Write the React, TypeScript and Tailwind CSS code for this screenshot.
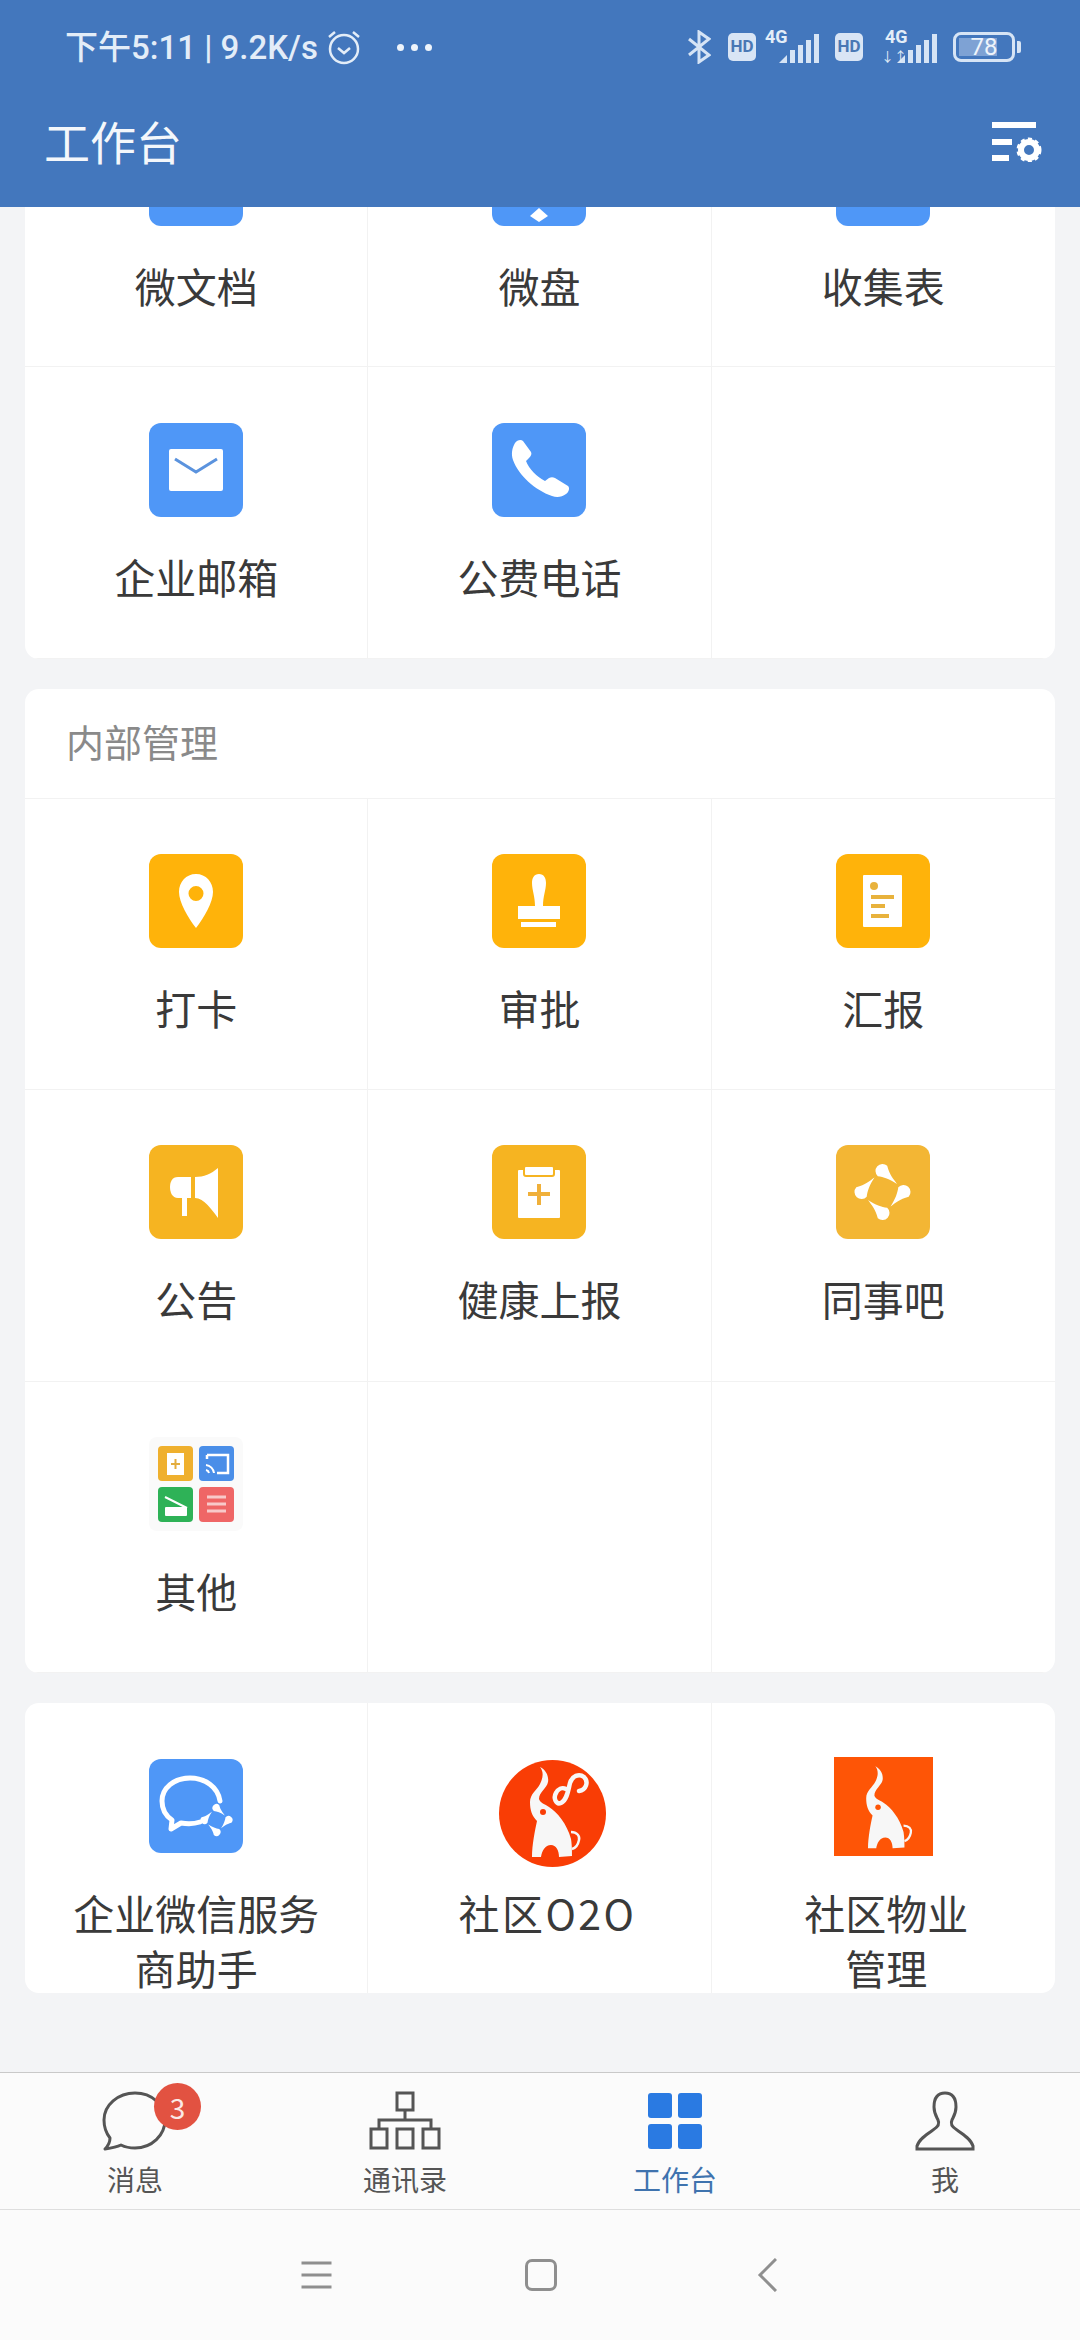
import React from "react";

const Box = ({ color, children }: { color: string; children?: React.ReactNode }) => (
  <svg width="94" height="94" viewBox="0 0 94 94" className="shrink-0">
    <rect width="94" height="94" rx="12" fill={color} />
    {children}
  </svg>
);

function Elephant({ eye, transform }: { eye: string; transform?: string }) {
  return (
    <g transform={transform}>
      <path
        d="M41 7C47 10 50 16 49 22C48 28 40 32 40 39C41 43 46 44 50 47C58 52 68 64 72 79C73 85 73 92 73 96L60 97C60 90 57 85 52 85C46 85 43 91 42 97L33 97C33 85 36 70 38 61C33 56 31 50 31 42C31 34 38 30 41 24C44 18 45 12 41 7Z"
        fill="#f7f7f7"
      />
      <circle cx="44" cy="52" r="3" fill={eye} />
      <path d="M72 72C78 72 81 76 80 80C79 85 77 88 73 89" fill="none" stroke="#f7f7f7" strokeWidth="2.500" />
    </g>
  );
}

function Blobs({ cx, cy, scale = 1 }: { cx: number; cy: number; scale?: number }) {
  return (
    <g transform={`translate(${cx} ${cy}) scale(${scale})`} fill="#fff">
      {[0, 90, 180, 270].map((r) => (
        <path
          key={r}
          transform={`rotate(${r})`}
          d="M4.700 -26.200A7 7 0 0 0 -4.700 -15.800C1 -15 7 -13 14.500 -8C11 -13 7 -17 4.700 -26.200Z"
        />
      ))}
    </g>
  );
}

const icons: Record<string, React.ReactNode> = {
  plain: <Box color="#4f97f7" />,
  disk: (
    <Box color="#4f97f7">
      <path d="M47 76l9 8-9 6-9-6z" fill="#fff" />
    </Box>
  ),
  mail: (
    <Box color="#4f97f7">
      <rect x="20" y="26" width="54" height="42" rx="2" fill="#fff" />
      <path d="M26 36l21 13 21-13" fill="none" stroke="#5b93de" strokeWidth="3" />
    </Box>
  ),
  phone: (
    <Box color="#4f97f7">
      <path
        d="M23 20c2-3 6-4 8-2l8 11c1 2 0 4-2 6l-3 3c3 8 11 16 19 20l4-3c2-1 4-1 6 0l13 8c2 2 1 6-2 8-4 3-9 4-14 2C43 67 27 53 21 37c-2-6-1-12 2-17z"
        fill="#fff"
      />
    </Box>
  ),
  pin: (
    <Box color="#ffb30a">
      <path
        fillRule="evenodd"
        d="M47 20c10 0 17 8 17 18 0 10-9 26-17 36-8-10-17-26-17-36 0-10 7-18 17-18zm0 12a7 7 0 1 0 0 15 7 7 0 0 0 0-15z"
        fill="#fff"
      />
    </Box>
  ),
  stamp: (
    <Box color="#ffb30a">
      <path d="M47 20c5 0 7 4 7 9 0 7-3 13-3 23H43c0-10-3-16-3-23 0-5 2-9 7-9z" fill="#fff" />
      <rect x="26" y="52" width="42" height="13" fill="#fff" />
      <rect x="29" y="68" width="35" height="5" fill="#fff" />
    </Box>
  ),
  report: (
    <Box color="#ffb30a">
      <rect x="27" y="21" width="39" height="52" rx="1" fill="#fff" />
      <circle cx="38" cy="32" r="4" fill="#e8b23c" />
      <rect x="35" y="41" width="23" height="4" fill="#e8b23c" />
      <rect x="35" y="50" width="14" height="4" fill="#e8b23c" />
      <rect x="35" y="60" width="18" height="4" fill="#e8b23c" />
    </Box>
  ),
  notice: (
    <Box color="#f6b421">
      <path d="M42 32H29c-6 0-8 5-8 10s2 11 8 11h13z" fill="#fff" />
      <path d="M46 32c9 0 16-3 23-9v50c-6-8-14-20-23-20z" fill="#fff" />
      <rect x="33" y="53" width="5" height="18" fill="#fff" />
    </Box>
  ),
  health: (
    <Box color="#f6b421">
      <rect x="26" y="25" width="42" height="48" rx="1" fill="#fff" />
      <rect x="32" y="21" width="30" height="10" rx="2" fill="#fff" stroke="#f6b421" strokeWidth="2" />
      <path d="M47 39v21M36 49h22" stroke="#f0b03a" strokeWidth="4" />
    </Box>
  ),
  colleague: (
    <Box color="#f3b634">
      <Blobs cx={46.5} cy={47} />
    </Box>
  ),
  other: (
    <svg width="94" height="94" viewBox="0 0 94 94" className="shrink-0">
      <rect width="94" height="94" rx="8" fill="#fafafa" />
      <rect x="9" y="9" width="35" height="35" rx="4" fill="#efb02e" />
      <rect x="18" y="16" width="17" height="22" fill="#fff" />
      <path d="M26.500 22v10M22 27h9" stroke="#e3ac3c" strokeWidth="2" />
      <rect x="50" y="9" width="35" height="35" rx="4" fill="#4a8ee8" />
      <path d="M58 18h21v18H68M58 22v-4" fill="none" stroke="#fff" strokeWidth="2.500" />
      <path d="M57 28a9 9 0 0 1 8 8M57 33a4 4 0 0 1 3 3" fill="none" stroke="#fff" strokeWidth="2" />
      <rect x="9" y="50" width="35" height="35" rx="4" fill="#2eb257" />
      <path d="M16 60l22 11" stroke="#fff" strokeWidth="2" />
      <rect x="16" y="70" width="22" height="9" rx="1" fill="#fff" />
      <rect x="50" y="50" width="35" height="35" rx="4" fill="#ef6666" />
      <path d="M58 60h19M58 67h19M58 74h19" stroke="#f8c9c9" strokeWidth="3" />
    </svg>
  ),
  helper: (
    <Box color="#4f97f7">
      <path
        d="M71 42C69 28 56 19 41 19C25 19 13 29 13 42C13 50 17 57 23 61L22 70L32 64C38 65 45 65 51 63"
        fill="none"
        stroke="#fff"
        strokeWidth="5"
        strokeLinecap="round"
        strokeLinejoin="round"
      />
      <Blobs cx={67.500} cy={61} scale={0.57} />
    </Box>
  ),
  o2o: (
    <svg width="107" height="107" viewBox="0 0 107 107" className="ml-[27px] mt-[14px] shrink-0">
      <circle cx="53.500" cy="53.500" r="53.500" fill="#f93d05" />
      <Elephant eye="#f93d05" />
      <path
        d="M80 31C87 30 90 22 85 17C80 13 73 16 71 23C69 31 68 40 62 43C57 45 54 38 57 33C59 29 63 27 67 29"
        fill="none"
        stroke="#f7f7f7"
        strokeWidth="4.500"
        strokeLinecap="round"
      />
    </svg>
  ),
  property: (
    <svg width="99" height="99" viewBox="0 0 100 100" className="shrink-0">
      <rect width="100" height="100" fill="#fe5506" />
      <Elephant eye="#fe5506" transform="translate(4 3) scale(0.92)" />
    </svg>
  ),
};

function Tile({
  icon,
  label,
  last,
  pad = "pt-[56px]",
  labelClass = "",
}: {
  icon?: string;
  label?: string;
  last?: boolean;
  pad?: string;
  labelClass?: string;
}) {
  return (
    <div className={`flex h-[291.5px] flex-col items-center border-b border-[#f2f2f2] ${pad} ${last ? "" : "border-r"}`}>
      <div className="flex h-[94px] w-full items-center justify-center">{icon && icons[icon]}</div>
      {label && (
        <div className={`mt-[32px] whitespace-pre-line text-center text-[41px] leading-[55px] text-[#3a3a3a] ${labelClass}`}>
          {label}
        </div>
      )}
    </div>
  );
}

function Signal() {
  return (
    <svg width="40" height="29" viewBox="0 0 40 29" className="self-end" fill="#d6e4f5">
      <path d="M0 29l8-8v8zM11 29V16h5v13zM19 29V11h5v18zM27 29V6h5v23zM35 29V0h5v29z" />
    </svg>
  );
}

function StatusBar() {
  return (
    <div className="flex h-[92px] items-center pl-[65px] pt-[2px] font-['Roboto','Noto_Sans_CJK_SC',sans-serif] text-[#e3edf8]">
      <span className="text-[33px] font-medium leading-none whitespace-nowrap">下午5:11 | 9.2K/s</span>
      <svg width="34" height="36" viewBox="0 0 34 36" fill="none" stroke="#e3edf8" strokeWidth="2.500" className="ml-[9px]">
        <circle cx="17" cy="20" r="14" />
        <path d="M11 19l6 5 6-5M2 8l6-5M32 8l-6-5" />
      </svg>
      <div className="ml-[36px] flex gap-[7px]">
        <div className="h-[7px] w-[7px] rounded-full bg-[#eef4fb]" />
        <div className="h-[7px] w-[7px] rounded-full bg-[#eef4fb]" />
        <div className="h-[7px] w-[7px] rounded-full bg-[#eef4fb]" />
      </div>
      <div className="ml-auto mr-[59px] flex h-[36px] items-center">
        <svg width="24" height="34" viewBox="0 0 24 34" fill="none" stroke="#d6e4f5" strokeWidth="3">
          <path d="M2 9l20 16-10 7V2l10 7L2 25" />
        </svg>
        <div className="ml-[17px] flex h-[28px] w-[28px] items-center justify-center rounded-[5px] bg-[#d9e5f5] text-[17px] font-bold text-[#4a78b4]">
          HD
        </div>
        <div className="relative ml-[9px] flex h-[32px] w-[54px] justify-end">
          <span className="absolute -top-[3px] left-0 text-[18px] font-bold leading-none">4G</span>
          <Signal />
        </div>
        <div className="ml-[16px] flex h-[28px] w-[28px] items-center justify-center rounded-[5px] bg-[#d9e5f5] text-[17px] font-bold text-[#4a78b4]">
          HD
        </div>
        <div className="relative ml-[20px] flex h-[32px] w-[54px] justify-end">
          <span className="absolute -top-[3px] left-[2px] text-[18px] font-bold leading-none">4G</span>
          <span className="absolute bottom-0 -left-[2px] text-[13px] leading-none">↓↑</span>
          <Signal />
        </div>
        <div className="relative ml-[16px] flex h-[30px] w-[62px] items-center justify-center rounded-[8px] border-[3px] border-[#d6e4f5] text-[24px] leading-none text-[#eef4fb]">
          <div className="absolute bottom-[3px] left-[3px] top-[3px] w-[38px] bg-[#7ea2d4]" />
          <span className="relative">78</span>
        </div>
        <div className="ml-[2px] h-[12px] w-[4px] rounded-r-[2px] bg-[#d6e4f5]" />
      </div>
    </div>
  );
}

function TabIcon({ name }: { name: string }) {
  if (name === "msg") {
    return (
      <svg width="66" height="60" viewBox="0 0 66 60" fill="none" stroke="#555" strokeWidth="3">
        <path
          d="M33 2c17 0 30 12 30 27S50 57 33 57c-6 0-10-1-14-3-4 2-9 3-16 4 3-3 5-7 5-11C4 42 2 36 2 29 2 14 16 2 33 2z"
          strokeLinejoin="round"
        />
      </svg>
    );
  }
  if (name === "org") {
    return (
      <svg width="72" height="60" viewBox="0 0 72 60" fill="none" stroke="#555" strokeWidth="3">
        <rect x="28" y="2" width="16" height="17" />
        <rect x="2" y="38" width="16" height="19" />
        <rect x="28" y="38" width="16" height="19" />
        <rect x="54" y="38" width="16" height="19" />
        <path d="M10 38v-9h52v9M36 19v10" />
      </svg>
    );
  }
  if (name === "grid") {
    return (
      <svg width="54" height="56" viewBox="0 0 54 56" fill="#2a7ae2">
        <rect width="24" height="25" rx="3" />
        <rect x="30" width="24" height="25" rx="3" />
        <rect y="31" width="24" height="25" rx="3" />
        <rect x="30" y="31" width="24" height="25" rx="3" />
      </svg>
    );
  }
  return (
    <svg width="60" height="60" viewBox="0 0 60 60" fill="none" stroke="#555" strokeWidth="3">
      <path d="M30 2c8 0 11 6 11 14 0 6-2 9-4 13-2 4 0 7 5 10 6 4 14 9 16 16v3H2v-3c2-7 10-12 16-16 5-3 7-6 5-10-2-4-4-7-4-13 0-8 3-14 11-14z" />
    </svg>
  );
}

const tabs = [
  { icon: "msg", label: "消息" },
  { icon: "org", label: "通讯录" },
  { icon: "grid", label: "工作台", active: true },
  { icon: "me", label: "我" },
];

export default function App() {
  return (
    <div className="flex h-[2340px] w-[1080px] flex-col overflow-hidden bg-[#f3f4f6] font-['Noto_Sans_CJK_SC',sans-serif]">
      <header className="relative z-10 h-[207px] shrink-0 bg-[#4377bd]">
        <StatusBar />
        <div className="flex items-center justify-between pl-[44px] pr-[38px] pt-[15px]">
          <h1 className="text-[46px] font-normal leading-[66px] text-[#f4f7fb]">工作台</h1>
          <svg width="50" height="40" viewBox="0 0 50 40" fill="#fff" className="mt-[4px]">
            <rect width="44" height="6" />
            <rect y="17" width="20" height="6" />
            <rect y="33" width="17" height="6" />
            <circle cx="37" cy="28" r="8" fill="none" stroke="#fff" strokeWidth="6" />
            <circle cx="37" cy="28" r="11" fill="none" stroke="#fff" strokeWidth="3" strokeDasharray="4 3.200" />
          </svg>
        </div>
      </header>

      <main className="min-h-0 flex-1 overflow-hidden">
        <div className="-mt-[131.5px] flex flex-col gap-[30px] px-[25px]">
          <section className="overflow-hidden rounded-[14px] bg-white">
            <div className="grid grid-cols-3">
              <Tile icon="plain" label="微文档" />
              <Tile icon="disk" label="微盘" />
              <Tile icon="plain" label="收集表" last />
              <Tile icon="mail" label="企业邮箱" />
              <Tile icon="phone" label="公费电话" />
              <Tile last />
            </div>
          </section>

          <section className="overflow-hidden rounded-[14px] bg-white">
            <div className="flex h-[110px] items-center border-b border-[#f2f2f2] pb-[5px] pl-[41px] text-[38px] text-[#8a8a8a]">
              内部管理
            </div>
            <div className="grid grid-cols-3">
              <Tile icon="pin" label="打卡" pad="pt-[55px]" />
              <Tile icon="stamp" label="审批" pad="pt-[55px]" />
              <Tile icon="report" label="汇报" pad="pt-[55px]" last />
              <Tile icon="notice" label="公告" pad="pt-[55px]" />
              <Tile icon="health" label="健康上报" pad="pt-[55px]" />
              <Tile icon="colleague" label="同事吧" pad="pt-[55px]" last />
              <Tile icon="other" label="其他" pad="pt-[55px]" />
              <Tile />
              <Tile last />
            </div>
          </section>

          <section className="h-[290px] overflow-hidden rounded-[14px] bg-white">
            <div className="grid grid-cols-3">
              <Tile icon="helper" label={"企业微信服务\n商助手"} />
              <Tile icon="o2o" label="社区O2O" labelClass="ml-[16px] tracking-[2.500px]" />
              <Tile icon="property" label={"社区物业\n管理"} labelClass="ml-[6px]" last />
            </div>
          </section>
        </div>
      </main>

      <nav className="grid h-[138px] shrink-0 grid-cols-4 border-b border-t border-b-[#dedede] border-t-[#c9c9c9] bg-[#fbfbfb]">
        {tabs.map((t) => (
          <div key={t.label} className="flex flex-col items-center pt-[18px]">
            <div className="relative flex h-[60px] items-center justify-center">
              <TabIcon name={t.icon} />
              {t.icon === "msg" && (
                <div className="absolute -right-[33px] -top-[8px] flex h-[47px] w-[47px] items-center justify-center rounded-full bg-[#e25241] text-[28px] text-[#fbe9e6]">
                  3
                </div>
              )}
            </div>
            <span className={`mt-[9px] text-[28px] leading-[38px] ${t.active ? "text-[#3f73ae]" : "text-[#555]"}`}>
              {t.label}
            </span>
          </div>
        ))}
      </nav>

      <div className="flex h-[130px] shrink-0 items-center bg-[#fbfbfb] pl-[301px]">
        <svg width="31" height="28" viewBox="0 0 30 28" stroke="#8f8f8f" strokeWidth="3">
          <path d="M0 2h30M0 14h30M0 26h30" />
        </svg>
        <div className="ml-[193px] h-[32px] w-[32px] rounded-[7px] border-[3px] border-[#8f8f8f]" />
        <svg width="20" height="34" viewBox="0 0 20 34" fill="none" stroke="#8f8f8f" strokeWidth="3" className="ml-[200px]">
          <path d="M19 1L3 17l16 16" />
        </svg>
      </div>
    </div>
  );
}
